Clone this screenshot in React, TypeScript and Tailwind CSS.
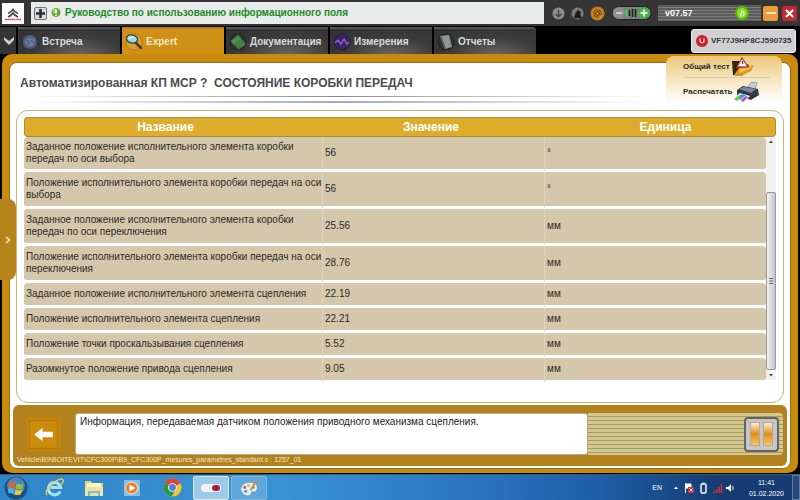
import { useState } from 'react';
import type { ReactNode } from 'react';

interface Param {
  name: string;
  value: string;
  unit: string;
}

const params: Param[] = [
  { name: 'Заданное положение исполнительного элемента коробки\nпередач по оси выбора', value: '56', unit: '°' },
  { name: 'Положение исполнительного элемента коробки передач на оси\nвыбора', value: '56', unit: '°' },
  { name: 'Заданное положение исполнительного элемента коробки\nпередач по оси переключения', value: '25.56', unit: 'мм' },
  { name: 'Положение исполнительного элемента коробки передач на оси\nпереключения', value: '28.76', unit: 'мм' },
  { name: 'Заданное положение исполнительного элемента сцепления', value: '22.19', unit: 'мм' },
  { name: 'Положение исполнительного элемента сцепления', value: '22.21', unit: 'мм' },
  { name: 'Положение точки проскальзывания сцепления', value: '5.52', unit: 'мм' },
  { name: 'Разомкнутое положение привода сцепления', value: '9.05', unit: 'мм' },
];

function CitroenLogo() {
  return (
    <svg viewBox="0 0 22 21" className="h-[21px] w-[22px] shrink-0 bg-white" aria-label="Citroën">
      <path d="M6 10.500Q9.500 9 11 6.600Q12.500 9 16 10.500" fill="none" stroke="#555" strokeWidth="1.800" />
      <path d="M6 14Q9.500 12.500 11 10.100Q12.500 12.500 16 14" fill="none" stroke="#444" strokeWidth="1.800" />
      <path d="M3 16.500h16" stroke="#d0485c" strokeWidth="1.600" strokeDasharray="1.800 .3" />
    </svg>
  );
}

function MeetingIcon() {
  return (
    <svg viewBox="0 0 18 18" className="size-[18px] shrink-0">
      <circle cx="9" cy="9" r="8" fill="#46536a" stroke="#272b32" />
      <circle cx="9" cy="9" r="6" fill="#53647f" />
      <path d="M4 7l3-2 3 1 3-1 1 4-2 3-4 2-3-3z" fill="#6c7e9a" />
      <path d="M6 7l2 2-1 3M10 7l1 2 2 0" fill="none" stroke="#465774" strokeWidth="1.200" />
    </svg>
  );
}

function MagnifierIcon() {
  return (
    <svg viewBox="0 0 18 18" className="size-[18px] shrink-0">
      <circle cx="9" cy="9" r="8" fill="#d9a032" stroke="#b57d0c" />
      <path d="M11 10l5 5" stroke="#4b3a20" strokeWidth="2.600" strokeLinecap="round" />
      <ellipse cx="7" cy="6" rx="5.600" ry="4" fill="#9fdde6" stroke="#2d4a48" strokeWidth="1.400" transform="rotate(12 7 6)" />
      <path d="M4 5.500Q6 3.500 9 4.500" stroke="#eaffff" strokeWidth="1.200" fill="none" />
    </svg>
  );
}

function BookIcon() {
  return (
    <svg viewBox="0 0 18 18" className="size-[18px] shrink-0">
      <circle cx="9" cy="9" r="8" fill="#303330" stroke="#222" />
      <path d="M2 8l7-6 7 8-6 6z" fill="#3f8243" />
      <path d="M2 8l7-6 3 3.500-7 6z" fill="#4c8f51" />
      <path d="M10 16l6-6v1.500l-6 5-8-8V8z" fill="#7d8c79" />
    </svg>
  );
}

function WaveIcon() {
  return (
    <svg viewBox="0 0 18 18" className="size-[18px] shrink-0">
      <circle cx="9" cy="9" r="8" fill="#3b2369" stroke="#242030" />
      <path d="M2 10l3-3 3 4 3-5 3 5 2-2" fill="none" stroke="#8a66c4" strokeWidth="1.400" />
    </svg>
  );
}

function ReportIcon() {
  return (
    <svg viewBox="0 0 18 18" className="size-[18px] shrink-0">
      <circle cx="9" cy="9" r="8" fill="#2f3130" stroke="#222" />
      <path d="M3 3l9-1 3 12-7 2z" fill="#8d9793" />
      <path d="M3 3l2 1 4 11.500-1 .5z" fill="#5d6562" />
    </svg>
  );
}

const tabs: { label: string; icon: ReactNode }[] = [
  { label: 'Встреча', icon: <MeetingIcon /> },
  { label: 'Expert', icon: <MagnifierIcon /> },
  { label: 'Документация', icon: <BookIcon /> },
  { label: 'Измерения', icon: <WaveIcon /> },
  { label: 'Отчеты', icon: <ReportIcon /> },
];

function TopBar() {
  return (
    <header className="flex h-[26px] items-center bg-[#353535] pl-0.5 pr-[3px]">
      <CitroenLogo />
      <div className="ml-[7px] flex h-[22px] min-w-0 flex-1 items-center bg-[#eaeceb] pl-[3px]">
        <button aria-label="Добавить" className="flex size-[13px] items-center justify-center rounded-[2px] border border-[#777] bg-[#d9dde3]">
          <svg viewBox="0 0 11 11" className="size-[11px]">
            <path d="M5.500 1v9M1 5.500h9" stroke="#2b2f38" strokeWidth="2.600" />
          </svg>
        </button>
        <svg viewBox="0 0 10 12" className="ml-1 h-3 w-[10px]">
          <circle cx="5" cy="5.500" r="4.500" fill="#6aa336" />
          <circle cx="4" cy="4" r="2.500" fill="#a7cf6e" />
          <path d="M5 2.500v4M5 7.500v1.500" stroke="#fff" strokeWidth="1.400" />
        </svg>
        <span className="ml-1 whitespace-nowrap text-[10px] leading-4 font-bold text-[#1b8a22]">
          Руководство по использованию информационного поля
        </span>
      </div>
      <div className="ml-2 flex items-center">
        <button aria-label="Загрузка" className="size-[13px]">
          <svg viewBox="0 0 14 14">
            <circle cx="7" cy="7" r="6.500" fill="#8b8b8b" />
            <path d="M7 3v7M4 7.500l3 3 3-3" fill="none" stroke="#444" strokeWidth="1.500" />
          </svg>
        </button>
        <button aria-label="Связь" className="ml-1.5 size-[13px]">
          <svg viewBox="0 0 14 14">
            <circle cx="7" cy="7" r="6.500" fill="#7c7c7c" />
            <path d="M3 12l2-6 3-3 3 3-1 2 2 4z" fill="#1d1d1d" />
          </svg>
        </button>
        <button aria-label="Почта" className="ml-1.5 size-[15px]">
          <svg viewBox="0 0 16 16">
            <circle cx="8" cy="8" r="7.500" fill="#b97c16" />
            <circle cx="8" cy="8" r="5.500" fill="#dc9c2c" />
            <circle cx="8" cy="8" r="2" fill="none" stroke="#6b4205" strokeWidth="1.200" />
            <path d="M10 6v3q2 1.500 2-1.500a4 4 0 1 0-2 4" fill="none" stroke="#6b4205" strokeWidth="1.200" />
          </svg>
        </button>
        <svg viewBox="0 0 42 14" className="ml-1.5 h-[14px] w-[42px]">
          <rect x="1" y=".5" width="39" height="13" rx="6.500" fill="#7d837f" stroke="#222" />
          <circle cx="8" cy="7" r="5.500" fill="#8f9390" />
          <path d="M5 7h6" stroke="#ddd" strokeWidth="1.500" />
          <path d="M15.500 4v6" stroke="#3fd04c" strokeWidth="2" />
          <path d="M18.500 4v6M21.500 3v8M24.500 3v8" stroke="#1c1f1d" strokeWidth="1.600" />
          <circle cx="33" cy="7" r="5.800" fill="#43b34d" />
          <path d="M29.500 7h7M33 3.500v7" stroke="#e5ffe5" strokeWidth="1.800" />
        </svg>
      </div>
      <div className="ml-[5px] flex h-4 w-[103px] items-center justify-between bg-[repeating-linear-gradient(to_bottom,#5c5c5c_0px,#5c5c5c_2px,#7c7c7c_2px,#7c7c7c_3px)] pl-[7px] pr-3">
        <span className="text-[9px] leading-4 font-bold text-white">v07.57</span>
        <svg viewBox="0 0 14 14" className="size-[14px]">
          <circle cx="7" cy="7" r="7" fill="#58b50b" />
          <circle cx="7" cy="7" r="5" fill="#8fe02a" />
          <path d="M5 11c1-2 1-3 2-6 2 1 3 3 1 5" fill="none" stroke="#e9ffc5" strokeWidth="1.300" />
        </svg>
      </div>
      <button aria-label="Свернуть" className="ml-0.5 flex size-[15px] items-center justify-center rounded-[2px] bg-[#ec9c3c]">
        <span className="h-0.5 w-[10px] bg-[#fde3c0]" />
      </button>
      <button aria-label="Закрыть" className="ml-1 flex size-[15px] items-center justify-center rounded-[2px] bg-[#c02832]">
        <svg viewBox="0 0 10 10" className="size-[9px]">
          <path d="M1 1l8 8M9 1l-8 8" stroke="#fff" strokeWidth="2.400" />
        </svg>
      </button>
    </header>
  );
}

function TabBar() {
  const [active, setActive] = useState('Expert');

  return (
    <nav className="flex h-7 gap-0.5 bg-black pt-px pr-1">
      <button aria-label="Меню" className="flex w-4 items-center justify-center bg-[#353535] pl-0.5">
        <svg viewBox="0 0 12 10" className="h-[10px] w-3">
          <path d="M1 1l5 4 5-4v3L6 9 1 4z" fill="#cfcfcf" />
        </svg>
      </button>
      {tabs.map((t) => (
        <button
          key={t.label}
          onClick={() => setActive(t.label)}
          className={`flex w-[102px] items-center gap-[3px] border-t-2 pl-[3px] text-[10px] leading-4 font-bold last-of-type:rounded-tr ${
            active === t.label
              ? 'border-[#bd8210] bg-[#cf9015] text-[#f3e6c8]'
              : 'border-[#555] bg-[radial-gradient(ellipse_at_60%_110%,#6a6a6a_0%,#3c3c3c_50%,#303030_100%)] text-[#dcdcdc]'
          }`}
        >
          {t.icon}
          <span>{t.label}</span>
        </button>
      ))}
      <div className="ml-auto flex h-6 w-[105px] items-center gap-[3px] self-center rounded-[3px] border border-[#eee] bg-[#d0d0d2] pl-1">
        <svg viewBox="0 0 12 12" className="size-3 shrink-0">
          <circle cx="6" cy="6" r="6" fill="#cf1f2a" />
          <path d="M4 3.500v3q2 3 4 0v-3" fill="none" stroke="#fff" strokeWidth="1.200" />
        </svg>
        <span className="text-[8px] leading-4 font-bold text-[#333]">VF77J9HP8CJ590735</span>
      </div>
    </nav>
  );
}

function QuickActions() {
  return (
    <div className="absolute -top-[7px] right-2 flex h-[46px] w-[116px] flex-col rounded-t-lg bg-linear-to-b from-[#ecc877] to-white pl-[17px] text-[8px] font-bold text-[#2e2a22]">
      <button className="flex h-[22px] items-center gap-0.5">
        <span className="w-[46px] text-left whitespace-nowrap">Общий тест</span>
        <svg viewBox="0 0 24 20" className="h-5 w-6">
          <path d="M1 4l8 0 9 4-7 11-9-1z" fill="#33240c" />
          <path d="M3 18l5-7 15-3-3 6-10 5z" fill="#d99620" />
          <path d="M9 12l13-3-3 3-11 4z" fill="#f3bf48" />
          <path d="M11 1l6 9H6z" fill="#fff" stroke="#bd3a3a" strokeWidth="1.300" />
          <path d="M11.500 4v3" stroke="#333" strokeWidth="1.200" />
        </svg>
      </button>
      <hr className="mr-3 border-[#d9ccab]" />
      <button className="flex h-6 items-center pt-1">
        <span className="w-[50px] text-left">Распечатать</span>
        <svg viewBox="0 0 26 22" className="h-[22px] w-[26px]">
          <path d="M15 6l3-5 6 1-2 7z" fill="#c9ced6" stroke="#777" strokeWidth=".6" />
          <path d="M4 9l6-4 15 3 1 6-8 5-14-5z" fill="#343a48" />
          <path d="M6 8l5-2 12 2-5 4z" fill="#7e8798" />
          <path d="M7 12l10 3-7 7-10-4z" fill="#eef" />
          <path d="M5 15l5-2 3 1-6 5z" fill="#29a6d8" />
          <path d="M1 18l4-3 3 1-4 4z" fill="#7ac143" />
          <path d="M8 19l5-4 2 1-5 5z" fill="#d240b8" />
        </svg>
      </button>
    </div>
  );
}

function ParamTable() {
  return (
    <section className="mx-1.5 mt-[7px] rounded-xl border border-[#c9b27c] px-[7px] pt-1.5 pb-[19px]">
      <table className="w-full table-fixed border-separate border-spacing-0 text-[10px] leading-3 text-[#2d2a25]">
        <colgroup>
          <col className="w-[298px]" />
          <col className="w-[222px]" />
          <col />
          <col className="w-[10px]" />
        </colgroup>
        <thead>
          <tr className="h-5 text-xs leading-4 text-white">
            <th className="rounded-l border border-r-0 border-[#a98c3c] bg-[#deac2b] p-0 pr-4">Название</th>
            <th className="border-y border-[#a98c3c] bg-[#deac2b] p-0 pr-1">Значение</th>
            <th colSpan={2} className="rounded-r border border-l-0 border-[#a98c3c] bg-[#deac2b] p-0 pl-3">Единица</th>
          </tr>
        </thead>
        <tbody>
          {params.map((p, i) => (
            <tr key={p.name} className="h-[25px] *:border-b-[3px] *:border-b-white">
              <td
                className={`rounded-l bg-[#d5c7ab] bg-clip-padding px-0 pl-0.5 whitespace-pre ${
                  i === 0 ? 'py-1' : p.name.includes('\n') ? 'py-[5px]' : 'py-0'
                }`}
              >
                {p.name}
              </td>
              <td className="border-l border-l-[#ddd2bc] bg-[#d5c7ab] bg-clip-padding px-0.5 py-0">{p.value}</td>
              <td className="rounded-r border-l border-l-[#ddd2bc] bg-[#d5c7ab] bg-clip-padding px-0.5 py-0">{p.unit}</td>
              {i === 0 && (
                <td rowSpan={params.length} className="h-px p-0">
                  <div className="flex h-full flex-col items-center bg-[#f1f1f1]">
                    <svg viewBox="0 0 10 10" className="size-[10px]">
                      <path d="M3 6l2-2.500L7 6z" fill="#444" />
                    </svg>
                    <div className="mt-[45px] flex w-full flex-1 items-center justify-center rounded-[2px] border border-[#999] bg-linear-to-r from-[#f3f3f3] to-[#c4c5c9]">
                      <svg viewBox="0 0 4 6" className="h-1.5 w-1">
                        <path d="M0 .5h4M0 3h4M0 5.500h4" stroke="#666" />
                      </svg>
                    </div>
                    <svg viewBox="0 0 10 10" className="size-[10px]">
                      <path d="M3 4l2 2.500L7 4z" fill="#444" />
                    </svg>
                  </div>
                </td>
              )}
            </tr>
          ))}
        </tbody>
      </table>
    </section>
  );
}

function InfoPanel() {
  return (
    <footer className="mx-[3px] mt-0.5 mb-0.5 flex flex-1 flex-col rounded-md bg-[#b3821f] pt-2">
      <div className="flex h-[42px] pr-1">
        <div className="flex w-[62px] items-center pl-[13px]">
          <button aria-label="Назад" className="flex size-[35px] items-center justify-center rounded border-[3px] border-[#c08410] bg-[#cb8b0d] shadow-[inset_0_0_2px_#7d5405]">
            <svg viewBox="0 0 20 14" className="h-[13px] w-[19px]">
              <path d="M0 7l9-7v4h11v6H9v4z" fill="#fff" />
            </svg>
          </button>
        </div>
        <textarea
          readOnly
          aria-label="Информация"
          className="block h-[42px] w-2/3 resize-none rounded-[3px] border border-[#b9a982] bg-white px-1 py-0.5 text-[10px] leading-3 text-[#222] outline-none"
          defaultValue="Информация, передаваемая датчиком положения приводного механизма сцепления."
        />
        <div className="flex flex-1 items-center justify-end rounded-r bg-[repeating-linear-gradient(to_bottom,#d0c792_0px,#d0c792_3px,#a99b5c_3px,#a99b5c_4px)] pr-1">
          <button aria-label="Пауза" className="flex size-[35px] items-center justify-center gap-[3px] rounded border-2 border-[#66645f] bg-[#c6c6c9]">
            <span className="h-6 w-[10px] border border-[#b5a98f] bg-linear-to-b from-[#fbeacb] via-[#e08e10] to-[#f7c560]" />
            <span className="h-6 w-[10px] border border-[#b5a98f] bg-linear-to-b from-[#fbeacb] via-[#e08e10] to-[#f7c560]" />
          </button>
        </div>
      </div>
      <p className="pl-1 text-[7px] leading-[10px] text-[#f4e6c2]">
        Vehicle\B9\BOITEVIT\CFC300P\B9_CFC300P_mesures_parametres_standard.s : 1257_01
      </p>
    </footer>
  );
}

function Taskbar() {
  return (
    <div className="flex h-[26px] items-center border-t border-[#2a5f8c] bg-[linear-gradient(to_right,#2f86c6_0%,#3a93d3_35%,#2a74bd_60%,#1e5ea6_75%,#163c72_90%)] pl-1">
      <button aria-label="Пуск" className="mr-[17px] size-6">
        <svg viewBox="0 0 24 24">
          <circle cx="12" cy="12" r="11.500" fill="#1c4f80" />
          <circle cx="12" cy="10" r="9" fill="#4687b8" />
          <path d="M5 7q3-2 6.500 0l-1 5q-3-1.500-6.500 0z" fill="#e8622c" />
          <path d="M12.500 7.500q3 2 7 0l-1 5q-4 1.500-7 0z" fill="#8cc63f" />
          <path d="M4 13q3-2 6.500 0l-1 5q-3-1.500-5-.5z" fill="#4ab4ea" />
          <path d="M11.500 13.500q3 2 7 0l-2 5q-3 1-6 0z" fill="#fbc62c" />
        </svg>
      </button>
      <button aria-label="Internet Explorer" className="mr-5 size-[19px]">
        <svg viewBox="0 0 20 20">
          <path d="M16 14a6.500 6.500 0 1 1 .5-4H6" fill="none" stroke="#a9e2fb" strokeWidth="3.200" />
          <path d="M2 18Q-1 13 8 6T19 2q1 2-2 5" fill="none" stroke="#f4cf4c" strokeWidth="1.400" />
        </svg>
      </button>
      <button aria-label="Проводник" className="mr-5 h-[18px] w-5">
        <svg viewBox="0 0 20 18">
          <path d="M1 2h6l1 2h11v12H1z" fill="#e6cf79" />
          <path d="M3 4h14v6H3z" fill="#fff4c4" />
          <path d="M1 8h18v9H1z" fill="#f3e09a" />
          <path d="M4 17v-5h12v5h-2v-3H6v3z" fill="#76bde2" />
        </svg>
      </button>
      <button aria-label="Проигрыватель" className="mr-[23px] size-4">
        <svg viewBox="0 0 16 16">
          <rect width="16" height="16" rx="1" fill="#8cbddd" />
          <circle cx="7.500" cy="8" r="6" fill="#ee7a1f" stroke="#e8edf0" />
          <path d="M5.500 4.500l6 3.500-6 3.500z" fill="#fff" />
        </svg>
      </button>
      <button aria-label="Chrome" className="mr-[11px] size-[19px]">
        <svg viewBox="0 0 20 20">
          <circle cx="10" cy="10" r="9.500" fill="#f4c430" />
          <path d="M10 10L1.800 5.200A9.500 9.500 0 0 1 18.300 5.500z" fill="#db4437" />
          <path d="M10 10L1.800 5.200A9.500 9.500 0 0 0 9 19.500l4.500-7.500z" fill="#269950" />
          <circle cx="10" cy="10" r="4.600" fill="#fff" />
          <circle cx="10" cy="10" r="3.600" fill="#4a7fdb" />
        </svg>
      </button>
      <button aria-label="Диагностика" className="mr-0.5 flex h-6 w-9 items-center justify-center rounded-[2px] border border-[#d5ecfa] bg-[#9bcbe9]">
        <svg viewBox="0 0 20 10" className="h-[10px] w-5">
          <rect y="1" width="20" height="8" rx="4" fill="#f2f2f4" />
          <rect x="11" y="2" width="8" height="6" rx="3" fill="#aa1f3e" />
        </svg>
      </button>
      <button aria-label="Paint" className="flex h-6 w-9 items-center justify-center rounded-[2px] border border-[#7fb9e2] bg-[#5fa7da]">
        <svg viewBox="0 0 20 20" className="size-[19px]">
          <path d="M1 12Q2 5 10 5t8 6q-1 4-5 3-2 1-2 3-2 2-5 1t-5-6z" fill="#e6f0f6" />
          <circle cx="5" cy="10" r="1.500" fill="#d94b3c" />
          <circle cx="9" cy="8" r="1.500" fill="#e8a52f" />
          <circle cx="14" cy="10" r="1.500" fill="#4caf50" />
          <circle cx="6" cy="14" r="1.500" fill="#3b7fd0" />
          <path d="M11 13l7-11" stroke="#d08a3c" strokeWidth="2" />
        </svg>
      </button>
      <div className="ml-auto flex items-center text-[7px] leading-[11px] text-white">
        <span className="mr-[9px]">EN</span>
        <svg viewBox="0 0 60 12" className="mr-3 h-3 w-[66px]">
          <path d="M0 7l2-2.500L4 7z" fill="#fff" />
          <path d="M11.500 1v10M12 2h5v4h-5" stroke="#fff" fill="#fff" />
          <rect x="14" y="5" width="6" height="6" fill="#d3303a" />
          <path d="M15.500 6.500l3 3m0-3l-3 3" stroke="#fff" />
          <rect x="27" y="2" width="5" height="9" rx="1" fill="none" stroke="#fff" strokeWidth="1.400" />
          <path d="M28.500 1h2" stroke="#fff" />
          <path d="M40 11V9M42.500 11V7M45 11V5M47.500 11V2" stroke="#c33" strokeWidth="1.600" />
          <path d="M52 5h2l3-3v8l-3-3h-2z" fill="#fff" />
          <path d="M58.500 4q1.500 2 0 4" fill="none" stroke="#fff" />
        </svg>
        <time className="mr-2 text-center">
          11:41
          <br />
          01.02.2020
        </time>
        <button aria-label="Показать рабочий стол" className="h-[25px] w-2 border border-[#5c7ba4] bg-[#28497a]" />
      </div>
    </div>
  );
}

export default function App() {
  return (
    <div className="flex min-h-screen flex-col bg-black font-['Liberation_Sans',Arial,sans-serif]">
      <TopBar />
      <TabBar />
      <div className="relative mx-0.5 mb-px flex flex-1 flex-col rounded-[10px] bg-[#c98b0c] px-[7px] pt-2 pb-1">
        <main className="relative flex flex-1 flex-col rounded-lg border border-[#8f6d25] bg-white">
          <h1 className="px-[10px] pt-3 text-xs leading-4 font-bold whitespace-pre text-[#4b4b4b]">
            {'Автоматизированная КП МСР ?  СОСТОЯНИЕ КОРОБКИ ПЕРЕДАЧ'}
          </h1>
          <div className="mt-[5px] mr-[140px] ml-4 flex flex-col gap-1">
            <div className="h-px bg-linear-to-r from-transparent via-[#8a8a8a] to-transparent" />
            <div className="h-0.5 bg-linear-to-r from-transparent via-[#a3a8ba] to-transparent" />
          </div>
          <ParamTable />
          <InfoPanel />
          <QuickActions />
        </main>
        <button
          aria-label="Открыть панель"
          className="absolute top-[145px] -left-0.5 flex h-[81px] w-4 items-center justify-center rounded-r-lg bg-[#b5851c]"
        >
          <svg viewBox="0 0 6 8" className="h-2 w-1.5">
            <path d="M1 1l3.500 3L1 7" fill="none" stroke="#f6e7c4" strokeWidth="1.600" />
          </svg>
        </button>
      </div>
      <Taskbar />
    </div>
  );
}
